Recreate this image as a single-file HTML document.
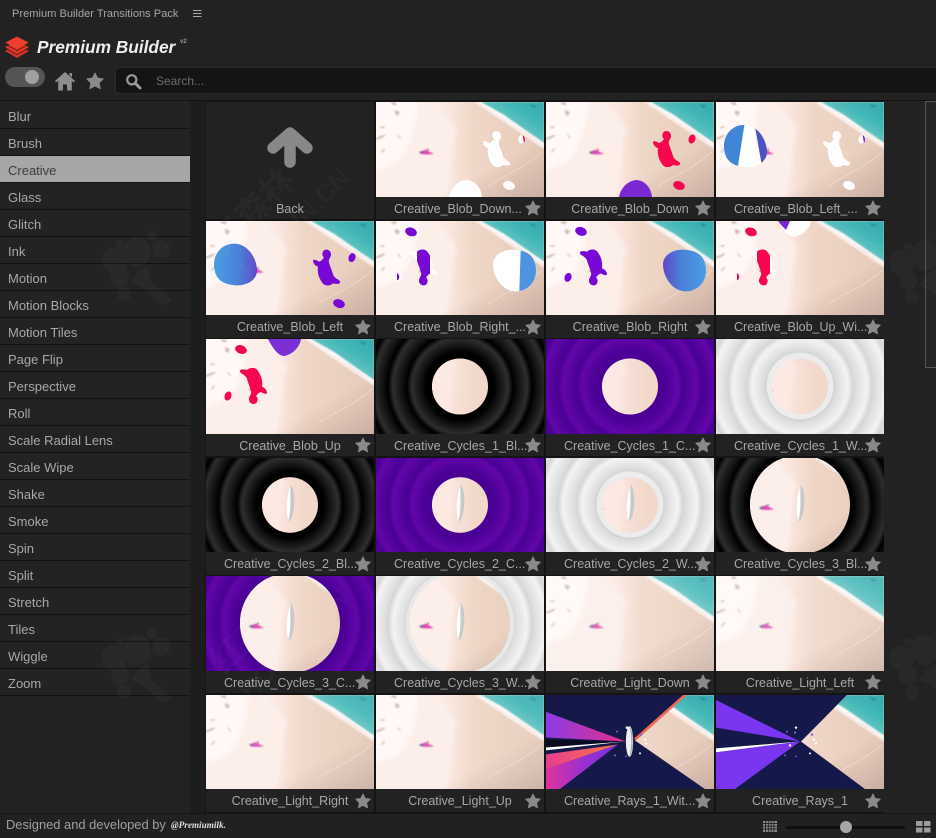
<!DOCTYPE html>
<html><head><meta charset="utf-8"><title>Premium Builder</title>
<style>
html,body{margin:0;padding:0;background:#222}
body{width:936px;height:838px;position:relative;overflow:hidden;font-family:"Liberation Sans","Noto Sans CJK SC",sans-serif;color:#b0b0b0}
.a{position:absolute}
#side{left:0;top:102px;width:190px}
#side div{height:26px;line-height:29px;padding-left:8px;font-size:13px;background:#232323;border-bottom:1px solid #121212;color:#a8a8a8}
#side div.on{background:#a6a6a6;color:#3c3c3c}
#grid{left:205px;top:100px;width:680px;height:713px;background:#141414}
.t{position:absolute;width:168px;height:117px;background:#222}
.t>svg.i{position:absolute;left:0;top:0;width:168px;height:95px;display:block}
.r1>svg.i,.r3>svg.i,.r5>svg.i{height:94px}
.t p{position:absolute;left:0;top:95px;width:168px;margin:0;height:23px;line-height:23px;font-size:12.5px;text-align:center;color:#a8a8a8;white-space:nowrap}
.r0 p,.r2 p,.r4 p{top:96px}
.t p.l{text-align:left;left:18px;width:150px}
.t svg.s{position:absolute;left:149px;top:98px;width:16px;height:16px}
.c0{left:1px}.c1{left:171px}.c2{left:341px}.c3{left:511px}
.r0{top:2px}.r1{top:121px}.r2{top:239px}.r3{top:358px}.r4{top:476px}.r5{top:595px}
.wm{position:absolute;color:rgba(255,255,255,.028);font-weight:bold;transform:rotate(-45deg);transform-origin:0 0;white-space:nowrap;line-height:1.05}
</style></head><body>
<svg width="0" height="0" style="position:absolute"><defs>
<linearGradient id="sand" x1="0" x2="1" y1="0" y2="0"><stop offset="0" stop-color="#fdf1ed"/><stop offset=".42" stop-color="#fbe8e1"/><stop offset=".58" stop-color="#efd6c6"/><stop offset="1" stop-color="#e6cbb9"/></linearGradient>
<linearGradient id="corner" x1="0" y1="0" x2="1" y2="1"><stop offset=".68" stop-color="#cfb3a7" stop-opacity="0"/><stop offset="1" stop-color="#c9aea3"/></linearGradient>
<linearGradient id="water" x1="0" y1="1" x2="1" y2="0"><stop offset=".3" stop-color="#7fd2ca"/><stop offset=".7" stop-color="#41b6b7"/><stop offset="1" stop-color="#34aab0"/></linearGradient>
<linearGradient id="blL" x1="0" x2="1" y1="0" y2="0"><stop offset="0" stop-color="#479fe4"/><stop offset=".6" stop-color="#4a7fd8"/><stop offset="1" stop-color="#6048c8"/></linearGradient>
<linearGradient id="ray1" x1="0" x2="1" y1="0" y2="0"><stop offset="0" stop-color="#8b3be6"/><stop offset="1" stop-color="#e33088"/></linearGradient>
<linearGradient id="ray2" x1="0" x2="1" y1="0" y2="0"><stop offset="0" stop-color="#e83c90"/><stop offset="1" stop-color="#f47a45"/></linearGradient>
<linearGradient id="ray3" x1="0" x2="1" y1="0" y2="0"><stop offset="0" stop-color="#e0329c"/><stop offset=".5" stop-color="#9b30d0"/><stop offset="1" stop-color="#7a30e0"/></linearGradient>
<radialGradient id="rb" gradientUnits="userSpaceOnUse" cx="84" cy="47" r="19" spreadMethod="repeat"><stop offset="0" stop-color="#0d0d0d"/><stop offset=".526" stop-color="#2e2e2e"/><stop offset=".79" stop-color="#000"/><stop offset="1" stop-color="#0d0d0d"/></radialGradient>
<radialGradient id="rp" gradientUnits="userSpaceOnUse" cx="84" cy="47" r="19" spreadMethod="repeat"><stop offset="0" stop-color="#4f029a"/><stop offset=".526" stop-color="#6206aa"/><stop offset=".79" stop-color="#4a0094"/><stop offset="1" stop-color="#4f029a"/></radialGradient>
<radialGradient id="rw" gradientUnits="userSpaceOnUse" cx="84" cy="47" r="19" spreadMethod="repeat"><stop offset="0" stop-color="#e0e0e0"/><stop offset=".526" stop-color="#f3f3f3"/><stop offset=".79" stop-color="#d6d6d6"/><stop offset="1" stop-color="#e0e0e0"/></radialGradient>
<filter id="bl" x="-20%" y="-20%" width="140%" height="140%"><feGaussianBlur stdDeviation="2"/></filter>
<filter id="bs" x="-10%" y="-10%" width="120%" height="120%"><feGaussianBlur stdDeviation=".7"/></filter>
<clipPath id="d28"><circle cx="84" cy="47.5" r="28"/></clipPath>
<clipPath id="d50"><circle cx="84" cy="47" r="50"/></clipPath>
<clipPath id="cb"><path d="M8 44C8 31 18 22 30 23C42 24 51 38 51 50C51 60 40 66 29 65C15 64 8 57 8 44Z"/></clipPath>
<clipPath id="cmid"><rect x="41" y="0" width="13" height="95"/></clipPath>
<clipPath id="cp2"><path d="M145 20H170V80H143Z"/></clipPath>
<clipPath id="rayb"><path d="M89 46L139 0H168V95H159Z"/></clipPath>
<clipPath id="rayb2"><path d="M85 47L131 0H168V95H149Z"/></clipPath>
<g id="beach">
<rect width="168" height="95" fill="url(#sand)"/>
<g filter="url(#bl)"><path d="M57 -3C68 10 80 22 81 30C76 38 78 44 76 60C75 75 72 85 71 98H-3V-3Z" fill="#fceee9"/><path d="M-3 -3H42C42 25 32 50 22 60L-3 70Z" fill="#fff8f6"/></g>
<rect width="168" height="95" fill="url(#corner)"/>
<g filter="url(#bs)"><g opacity=".5" fill="#a08c7c"><path d="M14 1L19 0L21 3L17 3ZM19 8L24 10L22 14L19 12ZM0 36L7 33L10 33L6 36L0 38ZM4 25L9 24L8 26L4 26ZM21 32L25 36L24 37L21 33ZM5 50L8 46L9 47L6 51Z"/></g>
<path d="M100 0L126 15L168 44V47L125 18L98 0Z" fill="#f8efea"/>
<path d="M103 0H168V41L150 29L127 13Z" fill="url(#water)"/>
<path d="M105 0L128 13L152 30L168 41V44L150 31L124 14L101 0Z" fill="#fff" opacity=".9"/>
<path d="M153 2L161 4L157 6Z" fill="#2a8f96"/>
<path d="M43 50L48 48.500L50 47.500L53 49.500L58 52L50 52.500L46 52Z" fill="#e446b6"/><path d="M43 50L48 48.500L48 51.500L45 52Z" fill="#7a6490"/><circle cx="52" cy="47.500" r=".8" fill="#4a3a4a"/></g>
<path d="M166 50C150 65 125 75 112 84" stroke="#f5e3d8" stroke-width="1" fill="none" opacity=".6"/>
</g>
<path id="splat" d="M117 31C118 28 124 28 125 33C125.500 37 122 38 123 42C124 46 126 50 127 54C128 58 133 59 134 61C135 64 130 64 127 63C124 66 118 66 116 62C113 58 111 52 112 46C110 46 107 43 107 40C108 38 111 40 113 41C115 41 117 38 118 37C116 35 116 33 117 31Z"/>
<path id="big" d="M8 44C8 31 18 22 30 23C42 24 51 38 51 50C51 60 40 66 29 65C15 64 8 57 8 44Z"/>
<g id="d1"><ellipse cx="133" cy="83.500" rx="6" ry="4.300" transform="rotate(20 133 83.500)"/></g>
<g id="d2"><ellipse cx="146" cy="37" rx="3.400" ry="4.600" transform="rotate(20 146 37)"/></g>
<g id="cbk"><rect width="168" height="95" fill="url(#rb)"/><circle cx="84" cy="47.500" r="34" fill="#000"/></g>
<g id="cpu"><rect width="168" height="95" fill="url(#rp)"/><circle cx="84" cy="47.500" r="34" fill="#4a0094"/></g>
<g id="cwh"><rect width="168" height="95" fill="url(#rw)"/><circle cx="84" cy="47.500" r="34.500" fill="#d2d2d2"/><circle cx="84" cy="47" r="33.500" fill="#ececec"/></g>
<g id="disk"><g clip-path="url(#d28)"><use href="#beach"/><rect width="168" height="95" fill="#f8e0d8" opacity=".35"/></g></g>
<g id="disk3"><g clip-path="url(#d50)"><use href="#beach"/></g></g>
<g id="lens"><path d="M85 27C82 35 79 53 83 64C88 62 91 36 85 27Z" fill="#c6caca"/><path d="M84.500 28C81 37 79 54 82.500 63C85.500 52 84 38 84.500 28Z" fill="#fff"/></g>
<path id="st" d="M8 .8L10.300 5.400L15.400 6.100L11.700 9.800L12.700 14.900L8 12.500L3.300 14.900L4.300 9.800L.6 6.100L5.700 5.400Z" fill="#8a8a8a" stroke="#8a8a8a" stroke-width=".7" stroke-linejoin="round"/>
<g id="paw" fill="#fff" opacity=".025"><ellipse cx="35" cy="30" rx="14" ry="15"/><ellipse cx="12" cy="38" rx="13" ry="13"/><ellipse cx="59" cy="27" rx="9" ry="9"/><ellipse cx="18" cy="55" rx="9" ry="10"/><ellipse cx="22" cy="72" rx="7" ry="7"/><circle cx="50" cy="14" r="5"/><circle cx="18" cy="22" r="4"/><path d="M38 48L46 44L48 58L70 78L60 84L42 66L28 60Z"/></g>
</defs></svg>

<div class="a" style="left:12px;top:6px;font-size:11.100px;line-height:16px;color:#a6a6a6;white-space:nowrap">Premium Builder Transitions Pack</div>
<svg class="a" style="left:193px;top:9px" width="9" height="9"><path d="M0 1.500H8.500M0 4.500H8.500M0 7.500H8.500" stroke="#aaa" stroke-width="1"/></svg>

<svg class="a" style="left:4px;top:36px" width="26" height="23" viewBox="0 0 26 23"><path d="M13 9L25 15L13 22L1 15Z" fill="#d63225"/><path d="M13 5L25 11L13 18L1 11Z" fill="#e43828"/><path d="M13 0.500L24.500 6.500L13 13L1.500 6.500Z" fill="#ee3f2e"/><path d="M1 8L13 14.500L25 8M1 12L13 18.500L25 12" stroke="#5a1a14" stroke-width=".8" fill="none"/></svg>
<div class="a" style="left:37px;top:36px;font-size:17.300px;line-height:22px;font-weight:bold;font-style:italic;color:#eee;white-space:nowrap">Premium Builder</div>
<div class="a" style="left:180px;top:39px;font-size:6px;line-height:7px;font-weight:bold;color:#999">v2</div>

<div class="a" style="left:5px;top:67px;width:40px;height:20px;border-radius:10px;background:#555"></div>
<div class="a" style="left:25px;top:70px;width:14px;height:14px;border-radius:50%;background:#a0a0a0"></div>
<svg class="a" style="left:55px;top:71px" width="20" height="20" viewBox="0 0 20 20"><path d="M10 1L20 10L18.800 11.500L16.800 9.800V19.500H12V13.500H8V19.500H3.200V9.800L1.200 11.500L0 10ZM14.500 2H17V6.500L14.500 4.300Z" fill="#8e8e8e"/></svg>
<svg class="a" style="left:86px;top:72px" width="18" height="18" viewBox="0 0 16 16"><use href="#st"/></svg>
<div class="a" style="left:115px;top:67px;width:830px;height:27px;border-radius:4px;background:#141414;border:1px solid #2a2a2a;box-sizing:border-box"></div>
<svg class="a" style="left:125px;top:73px" width="17" height="17" viewBox="0 0 17 17"><circle cx="6.800" cy="6.800" r="4.600" fill="none" stroke="#9a9a9a" stroke-width="2.200"/><path d="M10.300 10.300L15 15" stroke="#9a9a9a" stroke-width="3" stroke-linecap="round"/></svg>
<div class="a" style="left:156px;top:73px;font-size:12px;line-height:17px;color:#6e6e6e">Search...</div>

<div class="a" style="left:0;top:100px;width:936px;height:1px;background:#141414"></div>
<div class="a" style="left:0;top:101px;width:190px;height:1px;background:#232323"></div>
<div class="a" style="left:190px;top:101px;width:15px;height:712px;background:#1d1d1d"></div>
<div class="a" id="side">
<div>Blur</div><div>Brush</div><div class="on">Creative</div><div>Glass</div><div>Glitch</div><div>Ink</div><div>Motion</div><div>Motion Blocks</div><div>Motion Tiles</div><div>Page Flip</div><div>Perspective</div><div>Roll</div><div>Scale Radial Lens</div><div>Scale Wipe</div><div>Shake</div><div>Smoke</div><div>Spin</div><div>Split</div><div>Stretch</div><div>Tiles</div><div>Wiggle</div><div>Zoom</div>
</div>

<div class="a" id="grid">

<div class="t c0 r0"><svg class="i" viewBox="0 0 168 95" preserveAspectRatio="none"><path d="M67 46L84 31L101 46M84 33V60" fill="none" stroke="#888" stroke-width="11.500" stroke-linecap="round" stroke-linejoin="round"/></svg><p>Back</p></div>

<div class="t c1 r0"><svg class="i" viewBox="0 0 168 95" preserveAspectRatio="none"><use href="#beach"/><g fill="#fff"><use href="#splat"/><use href="#d1"/><use href="#d2"/><path d="M73 95C75 85 82 79 90 78C98 78 105 85 106 95Z"/></g><path d="M146.500 33C149 34 150 38 148 41Z" fill="#e8174e"/></svg><p class="l">Creative_Blob_Down...</p><svg class="s" viewBox="0 0 16 16"><use href="#st"/></svg></div>

<div class="t c2 r0"><svg class="i" viewBox="0 0 168 95" preserveAspectRatio="none"><use href="#beach"/><g fill="#f7064e"><use href="#splat"/><use href="#d1"/><use href="#d2"/></g><path d="M73 95C75 85 82 79 90 78C98 78 105 85 106 95Z" fill="#7a28d4"/></svg><p>Creative_Blob_Down</p><svg class="s" viewBox="0 0 16 16"><use href="#st"/></svg></div>

<div class="t c3 r0"><svg class="i" viewBox="0 0 168 95" preserveAspectRatio="none"><use href="#beach"/><g fill="#fff"><use href="#splat"/><use href="#d1"/><use href="#d2"/></g><path d="M146.500 33C149 34 150 38 148 41Z" fill="#7a28d4"/><g clip-path="url(#cb)"><rect width="60" height="95" fill="#fff"/><path d="M0 0H32L21 70H0Z" fill="#3f86d6"/><path d="M39 25L60 25V70H47Z" fill="#4b55c2"/></g></svg><p class="l">Creative_Blob_Left_...</p><svg class="s" viewBox="0 0 16 16"><use href="#st"/></svg></div>

<div class="t c0 r1"><svg class="i" viewBox="0 0 168 95" preserveAspectRatio="none"><use href="#beach"/><g fill="#7a08d4"><use href="#splat"/><use href="#d1"/><use href="#d2"/></g><use href="#big" fill="url(#blL)"/></svg><p>Creative_Blob_Left</p><svg class="s" viewBox="0 0 16 16"><use href="#st"/></svg></div>

<div class="t c1 r1"><svg class="i" viewBox="0 0 168 95" preserveAspectRatio="none"><use href="#beach"/><g transform="rotate(180 84 47)"><use href="#splat" fill="#fff"/><use href="#d2" fill="#fff"/></g><g clip-path="url(#cmid)"><g transform="rotate(180 84 47)"><use href="#splat" fill="#7a08d4"/></g></g><ellipse cx="35" cy="11" rx="6" ry="4.300" fill="#7a08d4" transform="rotate(20 35 11)"/><path d="M21 52.500C24 54 24 59 21 60Z" fill="#7a08d4"/><g transform="rotate(180 84 47)"><use href="#big" fill="#fff"/></g><g clip-path="url(#cp2)"><g transform="rotate(180 84 47)"><use href="#big" fill="#4d93e0"/></g></g></svg><p class="l">Creative_Blob_Right_...</p><svg class="s" viewBox="0 0 16 16"><use href="#st"/></svg></div>

<div class="t c2 r1"><svg class="i" viewBox="0 0 168 95" preserveAspectRatio="none"><use href="#beach"/><g transform="rotate(180 84 47)" fill="#7a08d4"><use href="#splat"/><use href="#d1"/><use href="#d2"/></g><g transform="rotate(180 84 47)"><use href="#big" fill="url(#blL)"/></g></svg><p>Creative_Blob_Right</p><svg class="s" viewBox="0 0 16 16"><use href="#st"/></svg></div>

<div class="t c3 r1"><svg class="i" viewBox="0 0 168 95" preserveAspectRatio="none"><use href="#beach"/><g transform="rotate(180 84 47)"><use href="#splat" fill="#fff"/></g><g clip-path="url(#cmid)"><g transform="rotate(180 84 47)"><use href="#splat" fill="#f7064e"/></g></g><ellipse cx="35" cy="11" rx="6" ry="4.300" fill="#f7064e" transform="rotate(20 35 11)"/><path d="M21 52.500C24 54 24 59 21 60Z" fill="#f7064e"/><path d="M62 0C66 8 72 16 78 16C86 15 94 8 95 0Z" fill="#fff"/><path d="M62 0H74L70 9C67 6 64 3 62 0Z" fill="#7a28d4"/></svg><p class="l">Creative_Blob_Up_Wi...</p><svg class="s" viewBox="0 0 16 16"><use href="#st"/></svg></div>

<div class="t c0 r2"><svg class="i" viewBox="0 0 168 95" preserveAspectRatio="none"><use href="#beach"/><g transform="rotate(180 84 47)" fill="#f7064e"><use href="#splat"/><use href="#d1"/><use href="#d2"/></g><path d="M62 0C66 8 72 17 78 17C86 16 94 8 95 0Z" fill="#7a30d4"/></svg><p>Creative_Blob_Up</p><svg class="s" viewBox="0 0 16 16"><use href="#st"/></svg></div>

<div class="t c1 r2"><svg class="i" viewBox="0 0 168 95" preserveAspectRatio="none"><use href="#cbk"/><use href="#disk"/></svg><p class="l">Creative_Cycles_1_Bl...</p><svg class="s" viewBox="0 0 16 16"><use href="#st"/></svg></div>

<div class="t c2 r2"><svg class="i" viewBox="0 0 168 95" preserveAspectRatio="none"><use href="#cpu"/><use href="#disk"/></svg><p class="l">Creative_Cycles_1_C...</p><svg class="s" viewBox="0 0 16 16"><use href="#st"/></svg></div>

<div class="t c3 r2"><svg class="i" viewBox="0 0 168 95" preserveAspectRatio="none"><use href="#cwh"/><use href="#disk"/></svg><p class="l">Creative_Cycles_1_W...</p><svg class="s" viewBox="0 0 16 16"><use href="#st"/></svg></div>

<div class="t c0 r3"><svg class="i" viewBox="0 0 168 95" preserveAspectRatio="none"><use href="#cbk"/><use href="#disk"/><use href="#lens"/></svg><p class="l">Creative_Cycles_2_Bl...</p><svg class="s" viewBox="0 0 16 16"><use href="#st"/></svg></div>

<div class="t c1 r3"><svg class="i" viewBox="0 0 168 95" preserveAspectRatio="none"><use href="#cpu"/><use href="#disk"/><use href="#lens"/></svg><p class="l">Creative_Cycles_2_C...</p><svg class="s" viewBox="0 0 16 16"><use href="#st"/></svg></div>

<div class="t c2 r3"><svg class="i" viewBox="0 0 168 95" preserveAspectRatio="none"><use href="#cwh"/><use href="#disk"/><use href="#lens"/></svg><p class="l">Creative_Cycles_2_W...</p><svg class="s" viewBox="0 0 16 16"><use href="#st"/></svg></div>

<div class="t c3 r3"><svg class="i" viewBox="0 0 168 95" preserveAspectRatio="none"><use href="#cbk"/><circle cx="84" cy="47" r="54" fill="#000"/><use href="#disk3"/><use href="#lens"/></svg><p class="l">Creative_Cycles_3_Bl...</p><svg class="s" viewBox="0 0 16 16"><use href="#st"/></svg></div>

<div class="t c0 r4"><svg class="i" viewBox="0 0 168 95" preserveAspectRatio="none"><use href="#cpu"/><circle cx="84" cy="47" r="54" fill="#4a0094"/><use href="#disk3"/><use href="#lens"/></svg><p class="l">Creative_Cycles_3_C...</p><svg class="s" viewBox="0 0 16 16"><use href="#st"/></svg></div>

<div class="t c1 r4"><svg class="i" viewBox="0 0 168 95" preserveAspectRatio="none"><use href="#cwh"/><circle cx="84" cy="47" r="54" fill="#e8e8e8"/><use href="#disk3"/><use href="#lens"/></svg><p class="l">Creative_Cycles_3_W...</p><svg class="s" viewBox="0 0 16 16"><use href="#st"/></svg></div>

<div class="t c2 r4"><svg class="i" viewBox="0 0 168 95" preserveAspectRatio="none"><use href="#beach"/><rect width="168" height="95" fill="#fff" opacity=".14"/></svg><p>Creative_Light_Down</p><svg class="s" viewBox="0 0 16 16"><use href="#st"/></svg></div>

<div class="t c3 r4"><svg class="i" viewBox="0 0 168 95" preserveAspectRatio="none"><use href="#beach"/><rect width="168" height="95" fill="#fff" opacity=".14"/></svg><p>Creative_Light_Left</p><svg class="s" viewBox="0 0 16 16"><use href="#st"/></svg></div>

<div class="t c0 r5"><svg class="i" viewBox="0 0 168 95" preserveAspectRatio="none"><use href="#beach"/><rect width="168" height="95" fill="#fff" opacity=".08"/></svg><p>Creative_Light_Right</p><svg class="s" viewBox="0 0 16 16"><use href="#st"/></svg></div>

<div class="t c1 r5"><svg class="i" viewBox="0 0 168 95" preserveAspectRatio="none"><use href="#beach"/><rect width="168" height="95" fill="#fff" opacity=".08"/></svg><p>Creative_Light_Up</p><svg class="s" viewBox="0 0 16 16"><use href="#st"/></svg></div>

<div class="t c2 r5"><svg class="i" viewBox="0 0 168 95" preserveAspectRatio="none"><rect width="168" height="95" fill="#14194a"/><g clip-path="url(#rayb)"><use href="#beach"/></g><path d="M88 44L137 0H141L90 46Z" fill="#ef6a52"/><path d="M0 17L80 47L0 43Z" fill="url(#ray1)"/><path d="M0 45L78 47L0 56Z" fill="#0a0a20"/><path d="M0 53L78 47L0 56Z" fill="#fff"/><path d="M0 60L72 50L0 75Z" fill="url(#ray2)"/><path d="M0 75L72 50L14 95H0Z" fill="url(#ray3)"/><ellipse cx="83.500" cy="47" rx="3.600" ry="15.500" fill="#eee"/><path d="M83 32C86 37 86 57 83 62C88 60 88 34 83 32Z" fill="#aaa"/><g fill="#fff"><circle cx="81" cy="33" r="1.300"/><circle cx="99" cy="45" r="1.100"/><circle cx="100" cy="49" r="1.100"/><circle cx="94" cy="59" r="1"/></g><g fill="#8a55e0"><circle cx="71" cy="37" r="1"/><circle cx="95" cy="40" r="1.200"/><circle cx="69" cy="61" r="1"/><circle cx="80" cy="62" r=".9"/></g></svg><p class="l">Creative_Rays_1_Wit...</p><svg class="s" viewBox="0 0 16 16"><use href="#st"/></svg></div>

<div class="t c3 r5"><svg class="i" viewBox="0 0 168 95" preserveAspectRatio="none"><rect width="168" height="95" fill="#14194a"/><g clip-path="url(#rayb2)"><use href="#beach"/></g><path d="M0 5L84 47L0 33Z" fill="#7a35ee"/><path d="M0 54L84 47L0 58Z" fill="#fff"/><path d="M0 58L84 47L19 95H0Z" fill="#7a35ee"/><g fill="#fff"><circle cx="80" cy="33" r="1.200"/><circle cx="98" cy="45" r="1.200"/><circle cx="100" cy="49" r="1.100"/><circle cx="94" cy="59" r="1"/><circle cx="74" cy="51" r="1.200"/></g><g fill="#8a55e0"><circle cx="71" cy="37" r="1"/><circle cx="79" cy="38" r="1.200"/><circle cx="96" cy="40" r="1.200"/><circle cx="69" cy="61" r="1"/><circle cx="80" cy="62" r=".9"/></g></svg><p>Creative_Rays_1</p><svg class="s" viewBox="0 0 16 16"><use href="#st"/></svg></div>

</div>

<div class="a" style="left:884px;top:101px;width:41px;height:712px;background:#222"></div>
<div class="a" style="left:925px;top:101px;width:14px;height:267px;background:#252525;border:1px solid #55555c;box-sizing:border-box"></div>

<div class="a" style="left:0;top:813px;width:936px;height:25px;background:#212121;border-top:1px solid #141414;box-sizing:border-box"></div>
<div class="a" style="left:6px;top:817px;font-size:12.900px;line-height:16px;color:#a0a0a0;white-space:nowrap">Designed and developed by</div>
<div class="a" style="left:171px;top:818px;font-family:'Liberation Serif',serif;font-style:italic;font-weight:bold;font-size:9.200px;line-height:15px;color:#ddd;white-space:nowrap">@Premiumilk.</div>
<svg class="a" style="left:763px;top:821px" width="15" height="12"><path d="M0 0H14V11H0Z" fill="#8c8c8c"/><path d="M2.500 0V11M5.300 0V11M8.100 0V11M10.900 0V11M0 2.400H14M0 5.200H14M0 8H14" stroke="#212121" stroke-width=".9"/></svg>
<div class="a" style="left:786px;top:826px;width:119px;height:3px;border-radius:2px;background:#111"></div>
<div class="a" style="left:840px;top:821px;width:12px;height:12px;border-radius:50%;background:#a6a6a6"></div>
<svg class="a" style="left:916px;top:821px" width="15" height="12"><path d="M0 0H6.500V5H0ZM8 0H14.500V5H8ZM0 6.500H6.500V11.500H0ZM8 6.500H14.500V11.500H8Z" fill="#9c9c9c"/></svg>

<svg class="a" style="left:102px;top:222px" width="90" height="90"><use href="#paw"/></svg>
<svg class="a" style="left:102px;top:620px" width="90" height="90"><use href="#paw"/></svg>
<svg class="a" style="left:890px;top:225px" width="90" height="90"><use href="#paw"/></svg>
<svg class="a" style="left:890px;top:620px" width="90" height="90"><use href="#paw"/></svg>
<div class="wm" style="left:205px;top:235px;font-size:34px">红森林<br><span style="font-size:26px">HOSLIN.CN</span></div>
<div class="wm" style="left:205px;top:655px;font-size:34px">红森林<br><span style="font-size:26px">HOSLIN.CN</span></div>
</body></html>
